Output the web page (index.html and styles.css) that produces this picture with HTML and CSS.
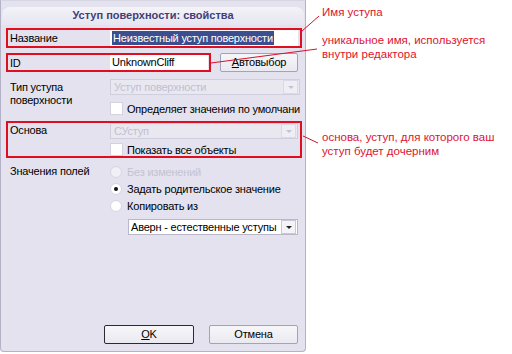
FILE: index.html
```html
<!DOCTYPE html>
<html lang="ru">
<head>
<meta charset="utf-8">
<title>Уступ поверхности: свойства</title>
<link rel="stylesheet" href="styles.css">
</head>
<body>
<div class="canvas">
  <div class="dialog">
    <div class="title">Уступ поверхности: свойства</div>
    <div class="form">
      <div class="mark row-name">
        <span class="label">Название</span>
        <div class="field"><span class="hl">Неизвестный уступ поверхности</span></div>
      </div>
      <div class="row-id">
        <div class="mark idbox">
          <span class="label">ID</span>
          <div class="field idfield">UnknownCliff</div>
        </div>
        <div class="btn auto"><u>А</u>втовыбор</div>
      </div>
      <div class="row-type">
        <div class="label two">Тип уступа<br>поверхности</div>
        <div class="col">
          <div class="combo dis"><span class="ctext">Уступ поверхности</span><span class="arrowbtn"><span class="tri"></span></span></div>
          <div class="check"><span class="box"></span><span>Определяет значения по умолчани</span></div>
        </div>
      </div>
      <div class="mark row-base">
        <div class="label">Основа</div>
        <div class="col">
          <div class="combo dis"><span class="ctext">СУступ</span><span class="arrowbtn"><span class="tri"></span></span></div>
          <div class="check c2"><span class="box"></span><span>Показать все объекты</span></div>
        </div>
      </div>
      <div class="row-vals">
        <div class="label">Значения полей</div>
        <div class="col">
          <div class="radio dis"><span class="dot"></span><span>Без изменений</span></div>
          <div class="radio on"><span class="dot"></span><span>Задать родительское значение</span></div>
          <div class="radio"><span class="dot"></span><span>Копировать из</span></div>
          <div class="combo live"><span class="ctext">Аверн - естественные уступы</span><span class="arrowbtn"><span class="tri"></span></span></div>
        </div>
      </div>
    </div>
    <div class="buttons">
      <div class="btn ok"><u>O</u>K</div>
      <div class="btn">Отмена</div>
    </div>
  </div>
  <div class="notes">
    <div class="note n1">Имя уступа</div>
    <div class="note n2">уникальное имя, используется<br>внутри редактора</div>
    <div class="note n3">основа, уступ, для которого ваш<br>уступ будет дочерним</div>
  </div>
  <svg class="lines" width="512" height="354" viewBox="0 0 512 354">
    <line x1="302" y1="31" x2="319" y2="16" />
    <line x1="211" y1="63" x2="317" y2="49" />
    <line x1="303" y1="136" x2="318" y2="143" />
  </svg>
</div>
</body>
</html>
```
FILE: styles.css
```css
* { box-sizing: border-box; }
html, body { margin: 0; padding: 0; background: #ffffff; }
body { font-family: "Liberation Sans", Arial, sans-serif; font-size: 11px; color: #000; }

.canvas { position: relative; width: 512px; height: 354px; display: flex; }

.dialog {
  width: 306px;
  height: 352px;
  flex: none;
  background: #e3e2ee;
  border: 1px solid #b3b2c6;
  border-top: 1px solid #d6d5e2;
  border-radius: 0 0 4px 4px;
  display: flex;
  flex-direction: column;
  letter-spacing: -0.2px;
}

.title {
  margin: 6px 1px 0;
  height: 18px;
  line-height: 17px;
  text-align: center;
  font-weight: bold;
  letter-spacing: 0;
  color: #3e3f78;
  border-radius: 8px 8px 0 0;
  background: linear-gradient(#f3f3f8, #e6e5f0);
}

.form { padding: 3px 3px 0 5px; display: flex; flex-direction: column; }

.mark { border: 2px solid #df0f1f; }

.label { width: 102px; padding-left: 2px; flex: none; }

.row-name { height: 20px; display: flex; align-items: center; }
.field {
  flex: 1;
  height: 16px;
  background: #fff;
  margin-right: 2px;
  padding-left: 2px;
  line-height: 16px;
  white-space: nowrap;
  overflow: hidden;
}
.hl { background: #3b4f8f; color: #fff; padding: 1px 1px; }

.row-id { margin-top: 5px; display: flex; align-items: center; gap: 9px; }
.idbox { width: 205px; height: 19px; display: flex; align-items: center; }
.idfield { height: 15px; line-height: 15px; margin-right: 1px; }

.btn {
  height: 19px;
  line-height: 17px;
  text-align: center;
  background: linear-gradient(#f6f6fa, #e9e9f0);
  border: 1px solid #a3a2b6;
  border-radius: 2px;
  white-space: nowrap;
}
.auto { width: 78px; }

.row-type { margin-top: 7px; display: flex; padding-left: 2px; }
.two { line-height: 13px; padding-top: 2px; }
.col { flex: 1; display: flex; flex-direction: column; margin-right: 2px; min-width: 0; }

.combo {
  height: 16px;
  display: flex;
  align-items: center;
  border: 1px solid #cfcedc;
  background: #e9e8f1;
  white-space: nowrap;
}
.combo .ctext { flex: 1; padding-left: 3px; }
.combo.dis .ctext { color: #c0bfd0; }
.arrowbtn {
  width: 15px;
  height: 14px;
  margin-right: 1px;
  flex: none;
  display: flex;
  align-items: center;
  justify-content: center;
  background: #efeef5;
  border: 1px solid #dad9e6;
}
.tri {
  width: 0; height: 0;
  border-left: 3px solid transparent;
  border-right: 3px solid transparent;
  border-top: 3px solid #c3c2d2;
}

.check { margin-top: 7px; height: 13px; display: flex; align-items: center; gap: 4px; white-space: nowrap; }
.check.c2 { margin-top: 4px; }
.box { width: 13px; height: 13px; background: #fff; border: 1px solid #d3d2de; flex: none; }

.row-base { margin-top: 6px; display: flex; padding-bottom: 0; height: 37px; }
.row-base .label { padding-top: 1px; }
.row-base .col { margin-right: 2px; }

.row-vals { margin-top: 5px; display: flex; padding-left: 2px; }
.row-vals .label { line-height: 17px; }
.radio { height: 17px; display: flex; align-items: center; gap: 5px; white-space: nowrap; }
.dot {
  width: 12px; height: 12px; border-radius: 50%;
  background: #fff; border: 1px solid #d6d5e1; flex: none;
  display: flex; align-items: center; justify-content: center;
}
.radio.on .dot::after { content: ""; width: 4px; height: 4px; border-radius: 50%; background: #111; }
.radio.dis { color: #c3c2d2; }
.radio.dis .dot { background: #f1f0f6; }

.combo.live {
  margin-top: 5px;
  margin-left: 18px;
  margin-right: 2px;
  background: #fff;
  border: 1px solid #b9b8c8;
}
.combo.live .ctext { padding-left: 2px; }
.combo.live .arrowbtn { background: #f4f4f8; border-color: #c9c8d6; }
.combo.live .tri { border-top-color: #222; }

.buttons { margin-top: auto; margin-bottom: 7px; margin-right: 7px; display: flex; justify-content: flex-end; gap: 15px; }
.buttons .btn { width: 89px; }
.buttons .ok { width: 90px; border-color: #2a2a36; }

.notes { padding-left: 16px; display: flex; flex-direction: column; }
.note { color: #e0122e; font-size: 11.5px; line-height: 14px; white-space: nowrap; }
.n1 { margin-top: 5px; }
.n2 { margin-top: 14px; }
.n3 { margin-top: 69px; }

.lines { position: absolute; left: 0; top: 0; pointer-events: none; }
.lines line { stroke: #d8102a; stroke-width: 1; }
```
